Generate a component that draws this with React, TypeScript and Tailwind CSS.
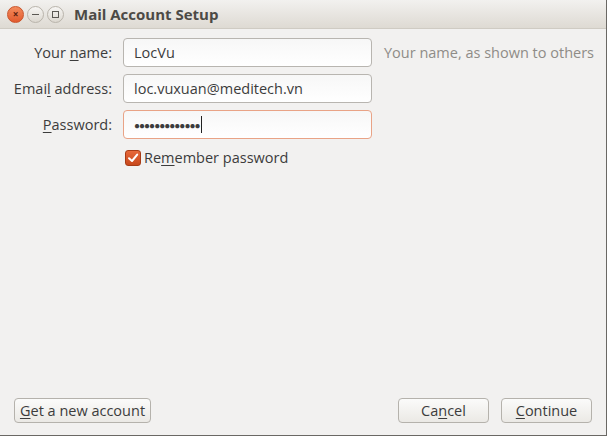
import React from 'react';

const font = { fontFamily: '"Open Sans", "Noto Sans", sans-serif' };

function U({ children }: { children: React.ReactNode }) {
  return <span className="underline underline-offset-2">{children}</span>;
}

function Field({
  label,
  value,
  focused,
  password,
}: {
  label: React.ReactNode;
  value: string;
  focused?: boolean;
  password?: boolean;
}) {
  return (
    <div className="flex items-center">
      <div className="w-[123px] shrink-0 text-right pr-[11px] text-[14.5px] text-[#3c3c3c]">{label}</div>
      <div
        className={
          'w-[249px] h-[29px] rounded-[4px] border bg-gradient-to-b from-[#f7f7f7] to-white flex items-center px-[10px] text-[14.5px] text-[#3c3c3c] ' +
          (focused ? 'border-[#e9a386]' : 'border-[#b8b5b0]')
        }
      >
        {password ? (
          <span className="flex items-center">
            <span className="tracking-[-1px] text-[#3c3c3c] text-[10px] leading-none">{'●'.repeat(13)}</span>
            <span className="ml-[1px] w-[1px] h-[17px] bg-[#222]" />
          </span>
        ) : (
          value
        )}
      </div>
    </div>
  );
}

function Btn({ children, w }: { children: React.ReactNode; w: string }) {
  return (
    <button
      className={
        w +
        ' h-[25px] rounded-[4px] border border-[#b5b2ac] bg-gradient-to-b from-[#fbfbfa] to-[#ebe9e5] text-[14.5px] text-[#3c3c3c] flex items-center justify-center'
      }
    >
      {children}
    </button>
  );
}

export default function App() {
  return (
    <div style={font} className="w-[607px] h-[436px] flex flex-col bg-[#f2f1f0] border-r border-b border-[#6a6864]">
      {/* title bar */}
      <div className="h-[29px] shrink-0 flex items-center rounded-tr-[6px] bg-gradient-to-b from-[#f2f1ef] to-[#dedad3] border-b border-[#cfcbc3]">
        <div className="flex items-center gap-[3px] pl-[7px]">
          <div className="w-[17px] h-[17px] rounded-full bg-gradient-to-b from-[#f38b5c] to-[#e2592c] border border-[#c9532a] flex items-center justify-center text-[#5a2110] text-[10px] font-bold leading-none">
            ×
          </div>
          <div className="w-[17px] h-[17px] rounded-full bg-gradient-to-b from-[#f7f6f4] to-[#dcd8d0] border border-[#b9b4ab] flex items-center justify-center">
            <span className="w-[7px] h-[1px] bg-[#5a5853]" />
          </div>
          <div className="w-[17px] h-[17px] rounded-full bg-gradient-to-b from-[#f7f6f4] to-[#dcd8d0] border border-[#b9b4ab] flex items-center justify-center">
            <span className="w-[7px] h-[7px] border border-[#5a5853]" />
          </div>
        </div>
        <div className="ml-[10px] text-[15px] font-bold text-[#4c4a46]">Mail Account Setup</div>
      </div>

      {/* form */}
      <div className="flex-1 flex flex-col pt-[9px]">
        <div className="flex items-center">
          <Field label={<>Your <U>n</U>ame:</>} value="LocVu" />
          <div className="ml-[12px] text-[14.5px] text-[#8f8c87]">Your name, as shown to others</div>
        </div>
        <div className="mt-[7px]">
          <Field label={<>Emai<U>l</U> address:</>} value="loc.vuxuan@meditech.vn" />
        </div>
        <div className="mt-[7px]">
          <Field label={<><U>P</U>assword:</>} value="" focused password />
        </div>
        <div className="mt-[8px] ml-[125px] flex items-center">
          <div className="w-[16px] h-[16px] rounded-[3px] bg-gradient-to-b from-[#e7693a] to-[#c8481b] border border-[#a83c16] flex items-center justify-center">
            <svg width="12" height="12" viewBox="0 0 12 12">
              <path d="M2 6.2 L5 9 L10.2 2.6" fill="none" stroke="white" strokeWidth="2" strokeLinecap="round" strokeLinejoin="round" />
            </svg>
          </div>
          <span className="ml-[3px] text-[14.5px] text-[#3c3c3c]">
            Re<U>m</U>ember password
          </span>
        </div>
      </div>

      {/* buttons */}
      <div className="flex items-center px-[14px] pb-[12px]">
        <Btn w="w-[137px]">
          <U>G</U>et a new account
        </Btn>
        <div className="flex-1" />
        <Btn w="w-[91px]">
          Ca<U>n</U>cel
        </Btn>
        <div className="w-[12px]" />
        <Btn w="w-[91px]">
          <U>C</U>ontinue
        </Btn>
      </div>
    </div>
  );
}
